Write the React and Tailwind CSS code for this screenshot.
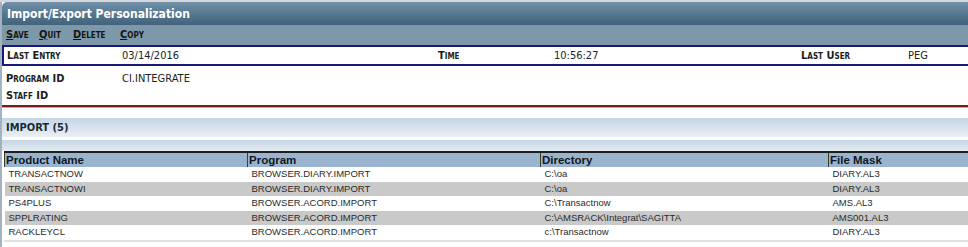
import React from 'react';

const rows = [
  ['TRANSACTNOW', 'BROWSER.DIARY.IMPORT', 'C:\\oa', 'DIARY.AL3'],
  ['TRANSACTNOWI', 'BROWSER.DIARY.IMPORT', 'C:\\oa', 'DIARY.AL3'],
  ['PS4PLUS', 'BROWSER.ACORD.IMPORT', 'C:\\Transactnow', 'AMS.AL3'],
  ['SPPLRATING', 'BROWSER.ACORD.IMPORT', 'C:\\AMSRACK\\Integrat\\SAGITTA', 'AMS001.AL3'],
  ['RACKLEYCL', 'BROWSER.ACORD.IMPORT', 'c:\\Transactnow', 'DIARY.AL3'],
];

const tahoma = { fontFamily: '"DejaVu Sans Condensed", "DejaVu Sans", Tahoma, sans-serif' };
const arial = { fontFamily: '"Liberation Sans", Arial, sans-serif' };

// small-caps bold label
function Label({ children, className = '' }) {
  return (
    <span className={`font-bold text-[11px] leading-[14px] text-[#1c1c1c] [font-variant:small-caps] ${className}`}>
      {children}
    </span>
  );
}

function MenuItem({ first, rest, className = '' }) {
  return (
    <span className={`font-bold text-[11px] leading-[14px] text-[#141414] [font-variant:small-caps] ${className}`}>
      <span className="underline">{first}</span>
      {rest}
    </span>
  );
}

export default function App() {
  return (
    <div className="w-[968px] h-[247px] overflow-hidden bg-white border-t-2 border-[#d3d7db]" style={tahoma}>
      <div className="border-l-2 border-[#a3b2c1] h-full">
        <div className="h-[23px] rounded-tl-[5px] bg-gradient-to-b from-[#7291aa] via-[#587890] to-[#41637b] flex items-center pl-[5px]">
          <span className="text-white font-bold text-[12px] leading-[14px]">Import/Export Personalization</span>
        </div>

        <div className="h-[20px] bg-[#7d98a8] flex items-center pl-[4px]">
          <MenuItem first="S" rest="ave" className="w-[33px]" />
          <MenuItem first="Q" rest="uit" className="w-[34px]" />
          <MenuItem first="D" rest="elete" className="w-[47px]" />
          <MenuItem first="C" rest="opy" />
        </div>

        <div className="h-[21px] border-y-2 border-l-2 border-[#19197a] flex items-center text-[11px] leading-[14px]">
          <Label className="w-[118px] pl-[3px]">Last Entry</Label>
          <span className="w-[316px] text-[#222]">03/14/2016</span>
          <Label className="w-[116px]">Time</Label>
          <span className="w-[247px] text-[#222]">10:56:27</span>
          <Label className="w-[107px]">Last User</Label>
          <span className="text-[#222]">PEG</span>
        </div>

        <div className="pt-[4px] pl-[4px] text-[11px] leading-[14px]">
          <div className="h-[17px] flex items-center">
            <Label className="w-[116px]">Program ID</Label>
            <span className="text-[#222]">CI.INTEGRATE</span>
          </div>
          <div className="h-[17px] flex items-center">
            <Label>Staff ID</Label>
          </div>
        </div>

        <div className="mt-[1px] h-[3px] bg-[#7a1c1c] border-b border-[#c8a4a4]" />

        <div className="mt-[10px] h-[19px] bg-gradient-to-b from-[#c4d6e6] to-[#eaeff3] flex items-center pl-[4px]">
          <span className="font-bold text-[11px] leading-[14px] text-[#1c2a36]">IMPORT (5)</span>
        </div>

        <div className="mt-[3px] h-[11px] bg-gradient-to-b from-[#c4d6e6] to-[#e4ebf1]" />

        <table className="ml-[2px] w-[966px] border-collapse table-fixed" style={arial}>
          <colgroup>
            <col className="w-[243px]" />
            <col className="w-[293px]" />
            <col className="w-[288px]" />
            <col />
          </colgroup>
          <thead>
            <tr className="bg-[#9ab4cf] border-t-2 border-[#1e1e1e]">
              {['Product Name', 'Program', 'Directory', 'File Mask'].map((h) => (
                <th
                  key={h}
                  className="h-[14px] p-0 pl-[1px] text-left font-bold text-[11.5px] leading-[14px] text-[#101820] border-l border-[#3a3a3a]"
                >
                  {h}
                </th>
              ))}
            </tr>
          </thead>
          <tbody>
            {rows.map((r, i) => (
              <tr key={i} className={i % 2 ? 'bg-[#c9c9c9]' : 'bg-white'}>
                {r.map((c, j) => (
                  <td key={j} className="h-[14.5px] p-0 pl-[4px] text-[9.5px] leading-[14px] text-[#2a2a2a] whitespace-nowrap">
                    {c}
                  </td>
                ))}
              </tr>
            ))}
          </tbody>
        </table>
        <div className="ml-[2px] h-[2px] bg-[#e0e0e0]" />
      </div>
    </div>
  );
}
